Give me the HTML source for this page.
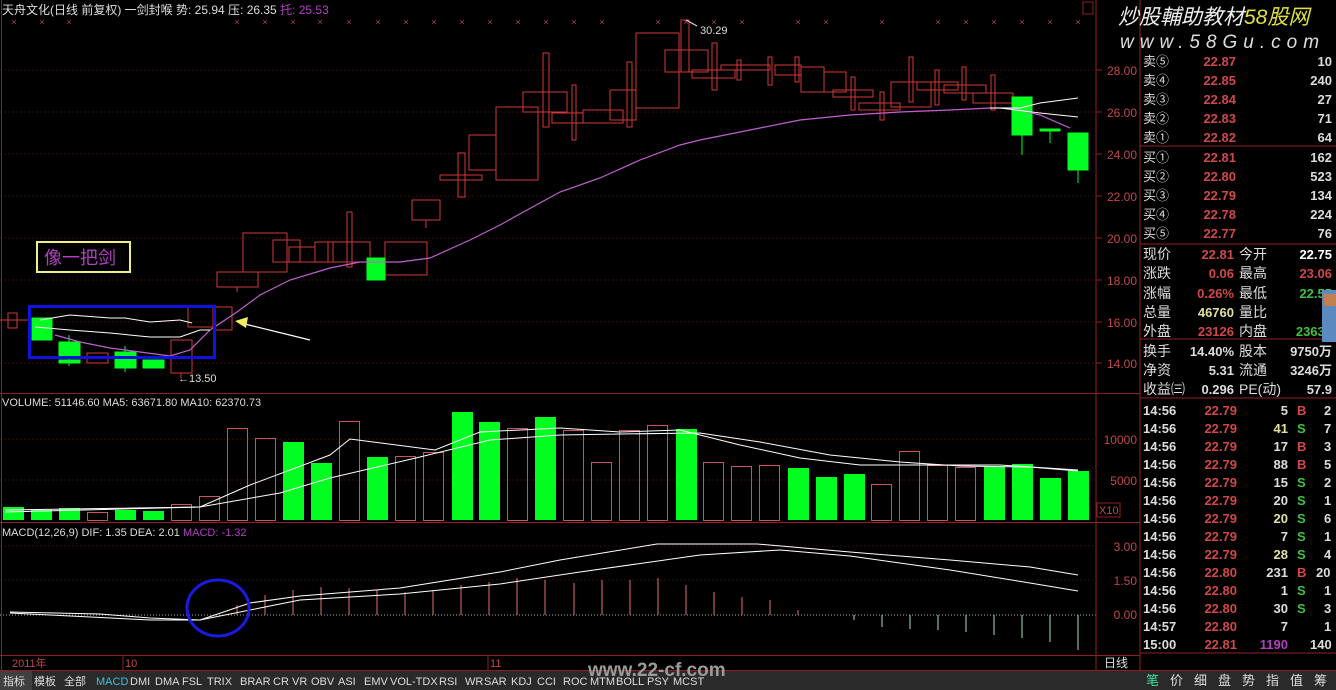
<!DOCTYPE html>
<html><head><meta charset="utf-8"><style>
body{margin:0;background:#000;width:1336px;height:690px;overflow:hidden;font-family:"Liberation Sans","Noto Sans CJK SC",sans-serif;}
svg{position:absolute;left:0;top:0}
.t{font-family:"Liberation Sans","Noto Sans CJK SC",sans-serif;}
</style></head><body>
<svg width="1336" height="690" viewBox="0 0 1336 690" xmlns="http://www.w3.org/2000/svg">
<rect width="1336" height="690" fill="#000"/>
<!-- grid -->
<g stroke="#3a0a0a" stroke-width="1" stroke-dasharray="2,2">
<line x1="0" y1="70" x2="1096" y2="70"/><line x1="0" y1="112" x2="1096" y2="112"/><line x1="0" y1="154" x2="1096" y2="154"/><line x1="0" y1="196" x2="1096" y2="196"/><line x1="0" y1="238" x2="1096" y2="238"/><line x1="0" y1="280" x2="1096" y2="280"/><line x1="0" y1="322" x2="1096" y2="322"/><line x1="0" y1="363" x2="1096" y2="363"/>
<line x1="0" y1="439" x2="1096" y2="439"/><line x1="0" y1="480" x2="1096" y2="480"/>
<line x1="0" y1="546" x2="1096" y2="546"/><line x1="0" y1="580" x2="1096" y2="580"/>
</g>
<line x1="0" y1="615" x2="1096" y2="615" stroke="#aaa" stroke-dasharray="1,2"/>
<!-- panel borders -->
<g stroke="#902020" stroke-width="1" fill="none">
<line x1="1096" y1="0" x2="1096" y2="670"/>
<line x1="1140" y1="0" x2="1140" y2="670"/>
<line x1="0" y1="393.5" x2="1140" y2="393.5"/>
<line x1="0" y1="522.5" x2="1140" y2="522.5"/>
<line x1="0" y1="655.5" x2="1140" y2="655.5"/>
<line x1="0" y1="670.5" x2="1336" y2="670.5"/>
<line x1="1140" y1="146" x2="1336" y2="146"/>
<line x1="1140" y1="244" x2="1336" y2="244"/>
<line x1="1140" y1="339" x2="1336" y2="339"/>
<line x1="1140" y1="398" x2="1336" y2="398"/>
<line x1="1140" y1="653" x2="1336" y2="653"/>
<line x1="1.5" y1="0" x2="1.5" y2="670"/>
</g>
<!-- axis ticks -->
<g stroke="#902020"><line x1="1096" y1="70" x2="1102" y2="70"/><line x1="1096" y1="112" x2="1102" y2="112"/><line x1="1096" y1="154" x2="1102" y2="154"/><line x1="1096" y1="196" x2="1102" y2="196"/><line x1="1096" y1="238" x2="1102" y2="238"/><line x1="1096" y1="280" x2="1102" y2="280"/><line x1="1096" y1="322" x2="1102" y2="322"/><line x1="1096" y1="363" x2="1102" y2="363"/></g>
<g class="t" font-size="12" fill="#c04848" text-anchor="end">
<text x="1137" y="75">28.00</text><text x="1137" y="117">26.00</text><text x="1137" y="159">24.00</text><text x="1137" y="201">22.00</text><text x="1137" y="243">20.00</text><text x="1137" y="285">18.00</text><text x="1137" y="327">16.00</text><text x="1137" y="368">14.00</text>
<text x="1137" y="444">10000</text><text x="1137" y="485">5000</text>
<text x="1137" y="551">3.00</text><text x="1137" y="585">1.50</text><text x="1137" y="619">0.00</text>
</g>
<rect x="1097" y="503" width="23" height="14" fill="none" stroke="#902020"/>
<text x="1099" y="514" class="t" font-size="11" fill="#c04848">X10</text>
<rect x="1083" y="2" width="10" height="12" fill="none" stroke="#902020"/>
<!-- header -->
<text x="2" y="14" class="t" font-size="12" fill="#ddd">天舟文化(日线 前复权) 一剑封喉 势: 25.94 压: 26.35 <tspan fill="#b040c0">托: 25.53</tspan></text>
<g class="t" font-size="9" fill="#c04060" text-anchor="middle">
<text x="14" y="25">×</text><text x="42" y="25">×</text><text x="69" y="25">×</text><text x="237" y="25">×</text><text x="265" y="25">×</text><text x="293" y="25">×</text><text x="320" y="25">×</text><text x="349" y="25">×</text><text x="378" y="25">×</text><text x="406" y="25">×</text><text x="434" y="25">×</text><text x="462" y="25">×</text><text x="490" y="25">×</text><text x="518" y="25">×</text><text x="546" y="25">×</text><text x="574" y="25">×</text><text x="602" y="25">×</text><text x="658" y="25">×</text><text x="686" y="25">×</text><text x="714" y="25">×</text><text x="742" y="25">×</text><text x="798" y="25">×</text><text x="826" y="25">×</text><text x="882" y="25">×</text><text x="938" y="25">×</text><text x="966" y="25">×</text><text x="994" y="25">×</text><text x="1022" y="25">×</text><text x="1050" y="25">×</text><text x="1078" y="25">×</text>
</g>
<!-- candles red hollow -->
<g stroke="#d03838" stroke-width="1" fill="none">
<line x1="0" y1="320" x2="30" y2="320"/>
<rect x="8" y="313" width="9" height="15"/>
<rect x="87" y="353" width="21" height="10"/>
<rect x="171" y="340" width="21" height="33"/><line x1="181" y1="373" x2="181" y2="378"/>
<rect x="188" y="307" width="25" height="20"/>
<rect x="215" y="307" width="17" height="23"/>
<rect x="217" y="272" width="41" height="15"/><line x1="237" y1="287" x2="237" y2="292"/>
<rect x="243" y="233" width="44" height="39"/>
<rect x="273" y="240" width="27" height="22"/>
<rect x="289" y="247" width="26" height="15"/>
<rect x="315" y="242" width="18" height="20"/>
<rect x="347" y="212" width="5" height="55"/>
<rect x="328" y="242" width="42" height="20"/>
<rect x="385" y="242" width="42" height="33"/>
<rect x="412" y="200" width="28" height="20"/><line x1="426" y1="220" x2="426" y2="228"/>
<rect x="440" y="175" width="42" height="5"/>
<rect x="458" y="153" width="7" height="44"/>
<rect x="469" y="135" width="27" height="35"/>
<rect x="496" y="107" width="42" height="73"/>
<rect x="523" y="92" width="44" height="20"/>
<rect x="543" y="53" width="6" height="74"/>
<rect x="552" y="113" width="31" height="10"/>
<rect x="572" y="85" width="4" height="55"/>
<rect x="583" y="110" width="40" height="13"/>
<rect x="610" y="90" width="26" height="30"/>
<rect x="627" y="62" width="5" height="65"/>
<rect x="636" y="33" width="43" height="75"/>
<rect x="681" y="20" width="8" height="52"/>
<rect x="665" y="50" width="43" height="22"/>
<rect x="692" y="70" width="43" height="8"/>
<rect x="712" y="43" width="5" height="47"/>
<rect x="721" y="65" width="49" height="5"/>
<rect x="737" y="60" width="4" height="20"/>
<rect x="768" y="57" width="4" height="28"/>
<rect x="775" y="65" width="26" height="10"/>
<rect x="795" y="57" width="4" height="25"/>
<rect x="801" y="67" width="23" height="25"/>
<rect x="824" y="72" width="22" height="20"/>
<rect x="851" y="77" width="4" height="33"/>
<rect x="833" y="90" width="40" height="7"/>
<rect x="859" y="103" width="41" height="7"/>
<rect x="880" y="92" width="4" height="28"/>
<rect x="891" y="82" width="40" height="25"/>
<rect x="909" y="57" width="4" height="45"/>
<rect x="917" y="82" width="41" height="8"/>
<rect x="935" y="70" width="4" height="35"/>
<rect x="944" y="85" width="42" height="8"/>
<rect x="962" y="67" width="4" height="33"/>
<rect x="991" y="75" width="4" height="35"/>
<rect x="973" y="93" width="40" height="10"/>
</g>
<!-- green candles -->
<g fill="#00ff20" stroke="#00ff20">
<rect x="32" y="318" width="20" height="22"/>
<rect x="59" y="342" width="21" height="16"/><rect x="59" y="360" width="21" height="3"/><line x1="69" y1="335" x2="69" y2="366"/>
<rect x="115" y="352" width="21" height="16"/><line x1="125" y1="346" x2="125" y2="372"/>
<rect x="143" y="360" width="21" height="8"/>
<rect x="367" y="258" width="18" height="22"/>
<rect x="1012" y="97" width="20" height="38"/><line x1="1022" y1="135" x2="1022" y2="155"/>
<rect x="1040" y="129" width="20" height="2"/><line x1="1050" y1="130" x2="1050" y2="143"/>
<rect x="1068" y="133" width="20" height="37"/><line x1="1078" y1="170" x2="1078" y2="183"/>
</g>
<!-- MA lines -->
<polyline fill="none" stroke="#c060d0" stroke-width="1.2" points="55,335 80,342 110,348 140,352 170,356 190,350 210,330 237,312 260,295 290,280 330,268 360,262 400,262 430,258 470,240 500,225 527,210 560,192 600,178 640,160 680,145 700,140 760,128 800,120 850,115 900,112 950,110 990,108 1010,108 1040,115 1070,128"/>
<polyline fill="none" stroke="#fff" stroke-width="1" points="40,320 70,315 110,318 125,318 150,322 180,320 192,323"/>
<polyline fill="none" stroke="#fff" stroke-width="1" points="35,327 70,330 110,333 150,337 180,337 200,330 210,330"/>
<polyline fill="none" stroke="#fff" stroke-width="1" points="990,108 1020,108 1040,103 1078,98"/>
<polyline fill="none" stroke="#fff" stroke-width="1" points="1000,108 1040,113 1078,117"/>
<!-- annotations -->
<rect x="29.5" y="306.5" width="185" height="51" fill="none" stroke="#1010e0" stroke-width="3"/>
<rect x="37" y="242" width="93" height="30" fill="none" stroke="#f0f080" stroke-width="2"/>
<text x="44" y="264" class="t" font-size="18" fill="#b040c0">像一把剑</text>
<line x1="310" y1="340" x2="245" y2="324" stroke="#fff" stroke-width="1.2"/>
<polygon points="235,321 248,317 246,328" fill="#f0f060"/>
<text x="178" y="382" class="t" font-size="11" fill="#ddd">←13.50</text>
<line x1="686" y1="20" x2="697" y2="26" stroke="#ddd"/>
<text x="700" y="34" class="t" font-size="11" fill="#ddd">30.29</text>
<!-- volume -->
<text x="2" y="406" class="t" font-size="11" fill="#ddd">VOLUME: 51146.60 MA5: 63671.80 MA10: 62370.73</text>
<g fill="#00ff20">
<rect x="3" y="507" width="21" height="13"/><rect x="31" y="510" width="21" height="10"/><rect x="59" y="508" width="21" height="12"/><rect x="115" y="510" width="21" height="10"/><rect x="143" y="511" width="21" height="9"/>
<rect x="283" y="442" width="21" height="78"/><rect x="311" y="463" width="21" height="57"/><rect x="367" y="457" width="21" height="63"/><rect x="452" y="412" width="21" height="108"/><rect x="479" y="422" width="21" height="98"/><rect x="535" y="417" width="21" height="103"/><rect x="676" y="429" width="21" height="91"/><rect x="788" y="468" width="21" height="52"/><rect x="816" y="477" width="21" height="43"/><rect x="844" y="474" width="21" height="46"/><rect x="984" y="467" width="21" height="53"/><rect x="1012" y="464" width="21" height="56"/><rect x="1040" y="478" width="21" height="42"/><rect x="1068" y="471" width="21" height="49"/>
</g>
<g fill="none" stroke="#d05060">
<rect x="87.5" y="512.5" width="20" height="8"/><rect x="171.5" y="504.5" width="20" height="16"/><rect x="199.5" y="496.5" width="20" height="24"/><rect x="227.5" y="428.5" width="20" height="92"/><rect x="255.5" y="438.5" width="20" height="82"/><rect x="339.5" y="421.5" width="20" height="99"/><rect x="395.5" y="456.5" width="20" height="64"/><rect x="423.5" y="452.5" width="20" height="68"/><rect x="507.5" y="428.5" width="20" height="92"/><rect x="563.5" y="430.5" width="20" height="90"/><rect x="591.5" y="462.5" width="20" height="58"/><rect x="619.5" y="430.5" width="20" height="90"/><rect x="647.5" y="425.5" width="20" height="95"/><rect x="703.5" y="462.5" width="20" height="58"/><rect x="731.5" y="466.5" width="20" height="54"/><rect x="759.5" y="465.5" width="20" height="55"/><rect x="871.5" y="484.5" width="20" height="36"/><rect x="899.5" y="451.5" width="20" height="69"/><rect x="927.5" y="465.5" width="20" height="55"/><rect x="955.5" y="467.5" width="20" height="53"/>
</g>
<polyline fill="none" stroke="#fff" points="5,510 200,507 250,485 330,455 350,439 435,450 480,432 560,428 620,432 680,430 740,445 800,458 860,465 940,465 1000,465 1078,470"/>
<polyline fill="none" stroke="#fff" points="5,512 200,507 280,493 330,478 420,457 490,440 560,435 620,434 700,433 760,442 830,455 900,462 960,466 1030,467 1078,471"/>
<!-- MACD -->
<text x="2" y="536" class="t" font-size="11" fill="#ddd">MACD(12,26,9) DIF: 1.35 DEA: 2.01 <tspan fill="#b040c0">MACD: -1.32</tspan></text>
<g stroke="#e07070" stroke-width="1">
<line x1="237" y1="615" x2="237" y2="605"/><line x1="265" y1="615" x2="265" y2="595"/><line x1="293" y1="615" x2="293" y2="590"/><line x1="321" y1="615" x2="321" y2="587"/><line x1="349" y1="615" x2="349" y2="588"/><line x1="377" y1="615" x2="377" y2="590"/><line x1="405" y1="615" x2="405" y2="592"/><line x1="433" y1="615" x2="433" y2="590"/><line x1="461" y1="615" x2="461" y2="585"/><line x1="489" y1="615" x2="489" y2="582"/><line x1="517" y1="615" x2="517" y2="578"/><line x1="545" y1="615" x2="545" y2="580"/><line x1="574" y1="615" x2="574" y2="583"/><line x1="602" y1="615" x2="602" y2="580"/><line x1="630" y1="615" x2="630" y2="580"/><line x1="658" y1="615" x2="658" y2="578"/><line x1="686" y1="615" x2="686" y2="585"/><line x1="714" y1="615" x2="714" y2="592"/><line x1="742" y1="615" x2="742" y2="597"/><line x1="770" y1="615" x2="770" y2="600"/><line x1="798" y1="615" x2="798" y2="610"/>
</g>
<g stroke="#a0e0c0" stroke-width="1">
<line x1="854" y1="615" x2="854" y2="620"/><line x1="882" y1="615" x2="882" y2="627"/><line x1="910" y1="615" x2="910" y2="629"/><line x1="938" y1="615" x2="938" y2="630"/><line x1="966" y1="615" x2="966" y2="632"/><line x1="994" y1="615" x2="994" y2="635"/><line x1="1022" y1="615" x2="1022" y2="638"/><line x1="1050" y1="615" x2="1050" y2="642"/><line x1="1078" y1="615" x2="1078" y2="650"/>
</g>
<polyline fill="none" stroke="#fff" points="10,612 100,614 150,618 200,620 250,603 300,596 400,588 500,572 560,560 657,544 757,544 850,552 950,560 1030,567 1078,575"/>
<polyline fill="none" stroke="#fff" points="10,613 150,620 200,620 260,608 300,600 400,594 500,584 580,572 700,555 780,550 850,556 950,570 1030,583 1078,591"/>
<ellipse cx="218" cy="608" rx="31" ry="28" fill="none" stroke="#1a1ae0" stroke-width="3"/>
<!-- date row -->
<g class="t" font-size="11" fill="#c04848"><text x="12" y="667">2011年</text><text x="125" y="667">10</text><text x="490" y="667">11</text></g>
<line x1="123" y1="656" x2="123" y2="670" stroke="#902020"/><line x1="488" y1="656" x2="488" y2="670" stroke="#902020"/>
<text x="1104" y="667" class="t" font-size="12" fill="#ddd">日线</text>
<!-- tab bar -->
<rect x="0" y="671" width="1336" height="19" fill="#2a2a2a"/>
<g class="t" font-size="11" fill="#ddd">
<rect x="0" y="671" width="32" height="19" fill="#404040"/><text x="3" y="685">指标</text>
<text x="34" y="685">模板</text><text x="64" y="685">全部</text>
<text x="96" y="685" fill="#40c0e0">MACD</text><text x="130" y="685">DMI</text><text x="155" y="685">DMA</text><text x="182" y="685">FSL</text><text x="207" y="685">TRIX</text><text x="240" y="685">BRAR</text><text x="273" y="685">CR</text><text x="292" y="685">VR</text><text x="311" y="685">OBV</text><text x="338" y="685">ASI</text><text x="364" y="685">EMV</text><text x="390" y="685">VOL-TDX</text><text x="439" y="685">RSI</text><text x="465" y="685">WR</text><text x="484" y="685">SAR</text><text x="511" y="685">KDJ</text><text x="537" y="685">CCI</text><text x="563" y="685">ROC</text><text x="590" y="685">MTM</text><text x="616" y="685">BOLL</text><text x="647" y="685">PSY</text><text x="673" y="685">MCST</text>
</g>
<text x="588" y="676" class="t" font-size="19" font-weight="bold" fill="#9a9a9a">www.22-cf.com</text>
<g class="t" font-size="13" fill="#ddd"><text x="1146" y="685" fill="#40e0a0">笔</text><text x="1170" y="685">价</text><text x="1194" y="685">细</text><text x="1218" y="685">盘</text><text x="1242" y="685">势</text><text x="1266" y="685">指</text><text x="1290" y="685">值</text><text x="1314" y="685">筹</text></g>
<!-- right panel logo -->
<text x="1118" y="24" class="t" font-size="21" font-style="italic" fill="#eee">炒股輔助教材<tspan fill="#e0e040">58股网</tspan></text>
<text x="1120" y="48" class="t" font-size="19" font-style="italic" fill="#ddd" letter-spacing="6">www.58Gu.com</text>
<!-- order book -->
<g class="t" font-size="13" font-weight="bold">
<g fill="#ddd" font-weight="normal"><text x="1143" y="66">卖⑤</text><text x="1143" y="85">卖④</text><text x="1143" y="104">卖③</text><text x="1143" y="123">卖②</text><text x="1143" y="142">卖①</text><text x="1143" y="162">买①</text><text x="1143" y="181">买②</text><text x="1143" y="200">买③</text><text x="1143" y="219">买④</text><text x="1143" y="238">买⑤</text></g>
<g fill="#d04848" text-anchor="end"><text x="1236" y="66">22.87</text><text x="1236" y="85">22.85</text><text x="1236" y="104">22.84</text><text x="1236" y="123">22.83</text><text x="1236" y="142">22.82</text><text x="1236" y="162">22.81</text><text x="1236" y="181">22.80</text><text x="1236" y="200">22.79</text><text x="1236" y="219">22.78</text><text x="1236" y="238">22.77</text></g>
<g fill="#ddd" text-anchor="end"><text x="1332" y="66">10</text><text x="1332" y="85">240</text><text x="1332" y="104">27</text><text x="1332" y="123">71</text><text x="1332" y="142">64</text><text x="1332" y="162">162</text><text x="1332" y="181">523</text><text x="1332" y="200">134</text><text x="1332" y="219">224</text><text x="1332" y="238">76</text></g>
<g fill="#ddd" font-weight="normal" font-size="14"><text x="1143" y="259">现价</text><text x="1143" y="278">涨跌</text><text x="1143" y="298">涨幅</text><text x="1143" y="317">总量</text><text x="1143" y="336">外盘</text><text x="1239" y="259">今开</text><text x="1239" y="278">最高</text><text x="1239" y="298">最低</text><text x="1239" y="317">量比</text><text x="1239" y="336">内盘</text><text x="1143" y="356">换手</text><text x="1143" y="375">净资</text><text x="1143" y="394">收益㈢</text><text x="1239" y="356">股本</text><text x="1239" y="375">流通</text><text x="1239" y="394">PE(动)</text></g>
<g text-anchor="end"><text x="1234" y="259" fill="#d04848">22.81</text><text x="1234" y="278" fill="#d04848">0.06</text><text x="1234" y="298" fill="#d04848">0.26%</text><text x="1234" y="317" fill="#e0e0a0">46760</text><text x="1234" y="336" fill="#d04848">23126</text><text x="1332" y="259" fill="#fff">22.75</text><text x="1332" y="278" fill="#d04848">23.06</text><text x="1332" y="298" fill="#40c040">22.55</text><text x="1332" y="336" fill="#40c040">23634</text>
<text x="1234" y="356" fill="#ddd">14.40%</text><text x="1234" y="375" fill="#ddd">5.31</text><text x="1234" y="394" fill="#ddd">0.296</text><text x="1332" y="356" fill="#ddd">9750万</text><text x="1332" y="375" fill="#ddd">3246万</text><text x="1332" y="394" fill="#ddd">57.9</text></g>
</g>
<rect x="1322" y="290" width="14" height="52" fill="#5a8ac0"/><rect x="1324" y="294" width="12" height="12" fill="#c08050"/>
<!-- ticks -->
<g class="t" font-size="13" font-weight="bold">
<g fill="#ddd"><text x="1143" y="415">14:56</text><text x="1143" y="433">14:56</text><text x="1143" y="451">14:56</text><text x="1143" y="469">14:56</text><text x="1143" y="487">14:56</text><text x="1143" y="505">14:56</text><text x="1143" y="523">14:56</text><text x="1143" y="541">14:56</text><text x="1143" y="559">14:56</text><text x="1143" y="577">14:56</text><text x="1143" y="595">14:56</text><text x="1143" y="613">14:56</text><text x="1143" y="631">14:57</text><text x="1143" y="649">15:00</text></g>
<g fill="#d04848" text-anchor="end"><text x="1237" y="415">22.79</text><text x="1237" y="433">22.79</text><text x="1237" y="451">22.79</text><text x="1237" y="469">22.79</text><text x="1237" y="487">22.79</text><text x="1237" y="505">22.79</text><text x="1237" y="523">22.79</text><text x="1237" y="541">22.79</text><text x="1237" y="559">22.79</text><text x="1237" y="577">22.80</text><text x="1237" y="595">22.80</text><text x="1237" y="613">22.80</text><text x="1237" y="631">22.80</text><text x="1237" y="649">22.81</text></g>
<g fill="#ddd" text-anchor="end"><text x="1288" y="415">5</text><text x="1288" y="433" fill="#e0e0a0">41</text><text x="1288" y="451">17</text><text x="1288" y="469">88</text><text x="1288" y="487">15</text><text x="1288" y="505">20</text><text x="1288" y="523" fill="#e0e0a0">20</text><text x="1288" y="541">7</text><text x="1288" y="559" fill="#e0e0a0">28</text><text x="1288" y="577">231</text><text x="1288" y="595">1</text><text x="1288" y="613">30</text><text x="1288" y="631">7</text><text x="1288" y="649" fill="#b040c0">1190</text></g>
<g><text x="1297" y="415" fill="#d04848">B</text><text x="1297" y="433" fill="#40c040">S</text><text x="1297" y="451" fill="#d04848">B</text><text x="1297" y="469" fill="#d04848">B</text><text x="1297" y="487" fill="#40c040">S</text><text x="1297" y="505" fill="#40c040">S</text><text x="1297" y="523" fill="#40c040">S</text><text x="1297" y="541" fill="#40c040">S</text><text x="1297" y="559" fill="#40c040">S</text><text x="1297" y="577" fill="#d04848">B</text><text x="1297" y="595" fill="#40c040">S</text><text x="1297" y="613" fill="#40c040">S</text></g>
<g fill="#ddd"><text x="1324" y="415">2</text><text x="1324" y="433">7</text><text x="1324" y="451">3</text><text x="1324" y="469">5</text><text x="1324" y="487">2</text><text x="1324" y="505">1</text><text x="1324" y="523">6</text><text x="1324" y="541">1</text><text x="1324" y="559">4</text><text x="1316" y="577">20</text><text x="1324" y="595">1</text><text x="1324" y="613">3</text><text x="1324" y="631">1</text><text x="1310" y="649">140</text></g>
</g>
</svg>
</body></html>
